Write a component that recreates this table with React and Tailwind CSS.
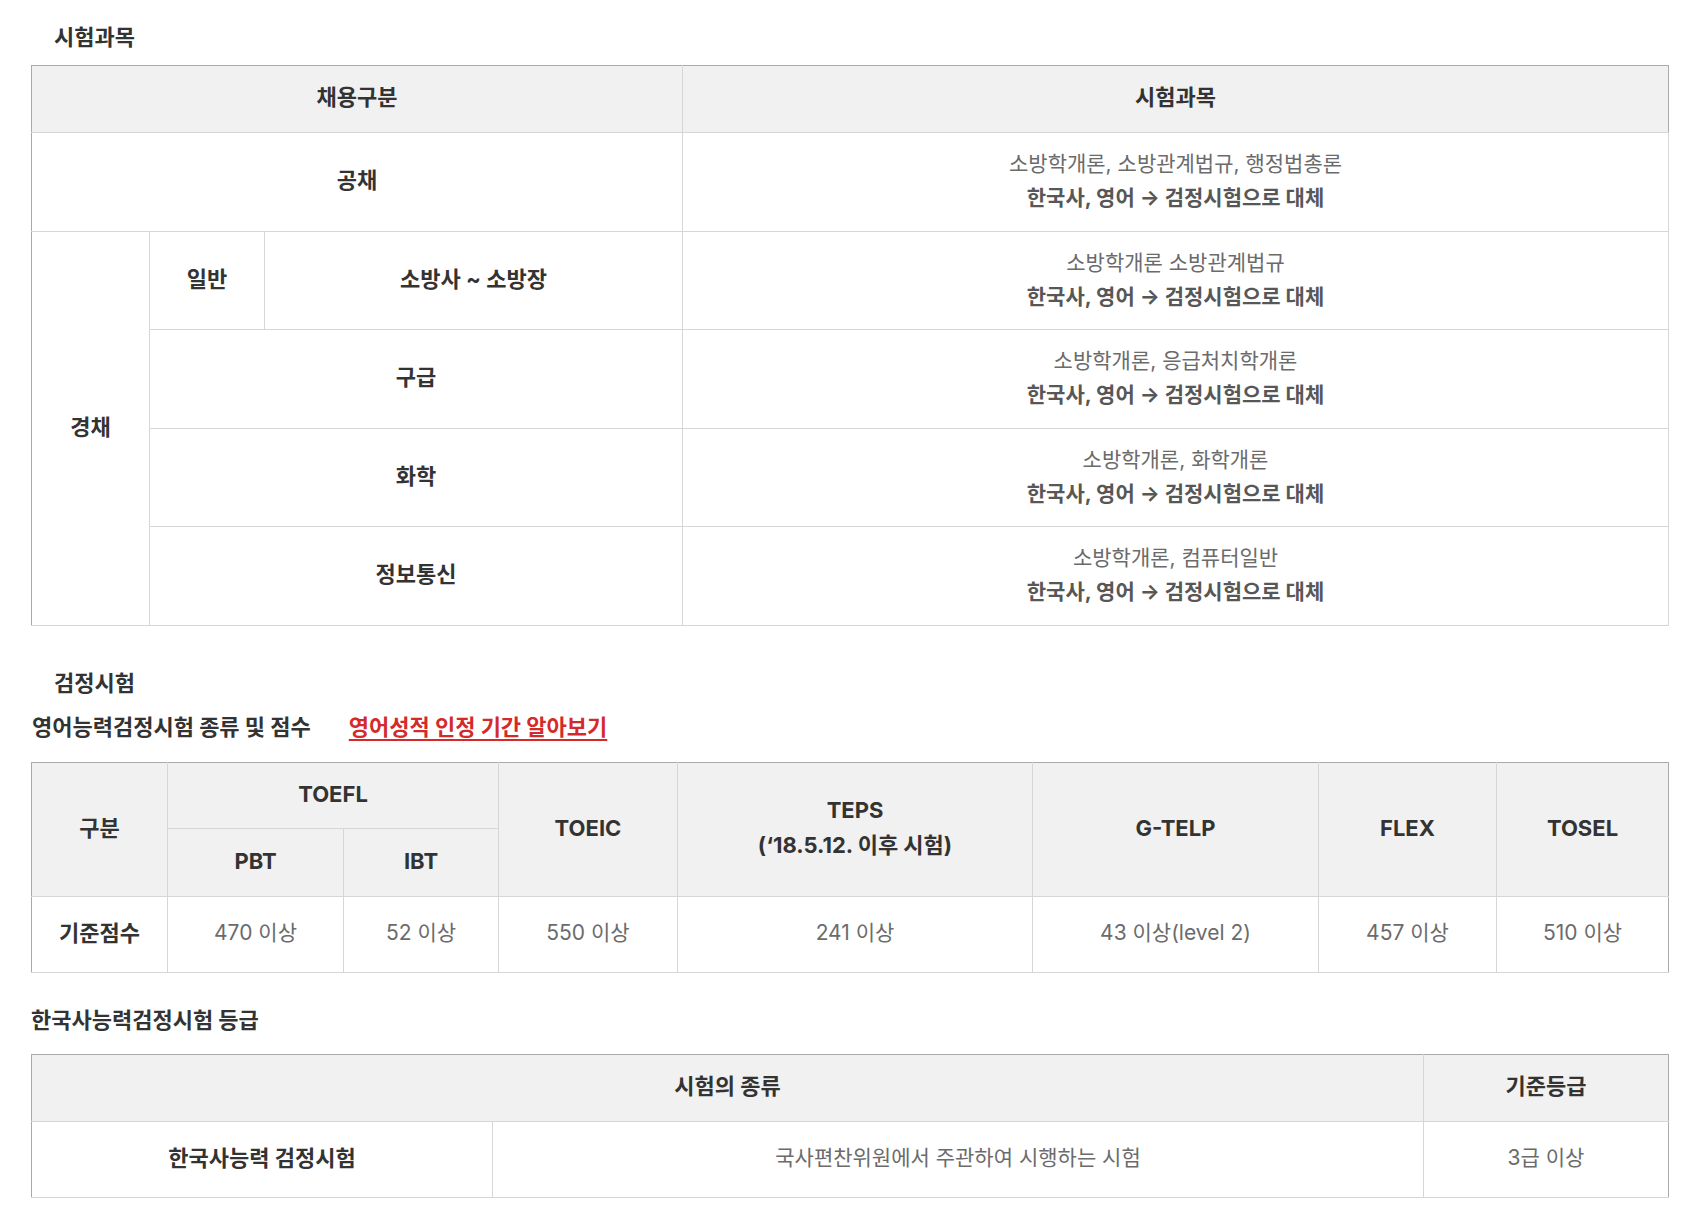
import React from "react";

const F = { fontFamily: '"Inter", "Noto Sans CJK KR", "Noto Sans", sans-serif' };

function Sub({ a }) {
  return (
    <td className="border border-[#d6d6d6] text-center align-middle text-[21px] pb-[2px]">
      <div className="text-[#6b6b6b] font-normal leading-[34px]">{a}</div>
      <div className="text-[#575757] font-bold leading-[34px]">한국사, 영어 → 검정시험으로 대체</div>
    </td>
  );
}

export default function App() {
  const th = "border border-[#d6d6d6] bg-[#f1f1f1] text-[#333] font-bold text-center align-middle text-[22px] pb-[3px]";
  const tdB = "border border-[#d6d6d6] text-[#333] font-bold text-center align-middle text-[22px] pb-[3px]";
  const tdG = "border border-[#d6d6d6] text-[#6b6b6b] font-normal text-center align-middle text-[21px] pb-[3px]";
  return (
    <div className="bg-white w-[1695px] min-h-[1224px] pl-[31px] pt-[22px] text-[22px] text-[#333]" style={F}>
      <div className="pl-[23px] h-[30px] leading-[30px] font-bold">시험과목</div>
      <table className="mt-[13px] w-[1638px] table-fixed border-collapse border-t border-l border-r border-t-[#aaa] border-l-[#aaa] border-r-[#aaa]">
        <colgroup>
          <col className="w-[118px]" />
          <col className="w-[115px]" />
          <col className="w-[418px]" />
          <col />
        </colgroup>
        <tbody>
          <tr className="h-[67px]">
            <th colSpan={3} className={th + " border-t-[#aaa] border-l-[#aaa]"}>채용구분</th>
            <th className={th + " border-t-[#aaa] border-r-[#aaa]"}>시험과목</th>
          </tr>
          <tr className="h-[99px]">
            <td colSpan={3} className={tdB + " border-l-[#aaa]"}>공채</td>
            <Sub a="소방학개론, 소방관계법규, 행정법총론" />
          </tr>
          <tr className="h-[98px]">
            <td rowSpan={4} className={tdB + " border-l-[#aaa]"}>경채</td>
            <td className={tdB}>일반</td>
            <td className={tdB}>소방사 ~ 소방장</td>
            <Sub a="소방학개론 소방관계법규" />
          </tr>
          <tr className="h-[99px]">
            <td colSpan={2} className={tdB}>구급</td>
            <Sub a="소방학개론, 응급처치학개론" />
          </tr>
          <tr className="h-[98px]">
            <td colSpan={2} className={tdB}>화학</td>
            <Sub a="소방학개론, 화학개론" />
          </tr>
          <tr className="h-[99px]">
            <td colSpan={2} className={tdB}>정보통신</td>
            <Sub a="소방학개론, 컴퓨터일반" />
          </tr>
        </tbody>
      </table>

      <div className="mt-[42px] pl-[23px] h-[30px] leading-[30px] font-bold">검정시험</div>
      <div className="mt-[14px] h-[30px] leading-[30px] flex items-center pl-[1px]">
        <span className="font-bold text-[#333]">영어능력검정시험 종류 및 점수</span>
        <a href="#" className="ml-[38px] font-bold text-[#d42a2a] underline underline-offset-[4px] decoration-[2px]">영어성적 인정 기간 알아보기</a>
      </div>

      <table className="mt-[20px] w-[1638px] table-fixed border-collapse border-t border-l border-r border-t-[#aaa] border-l-[#aaa] border-r-[#aaa]">
        <colgroup>
          <col className="w-[136px]" />
          <col className="w-[176px]" />
          <col className="w-[155px]" />
          <col className="w-[179px]" />
          <col className="w-[355px]" />
          <col className="w-[286px]" />
          <col className="w-[178px]" />
          <col />
        </colgroup>
        <tbody>
          <tr className="h-[66px]">
            <th rowSpan={2} className={th + " border-t-[#aaa] border-l-[#aaa]"}>구분</th>
            <th colSpan={2} className={th + " border-t-[#aaa]"}>TOEFL</th>
            <th rowSpan={2} className={th + " border-t-[#aaa]"}>TOEIC</th>
            <th rowSpan={2} className={th + " border-t-[#aaa]"}>
              <div className="leading-[35px]">TEPS</div>
              <div className="leading-[35px]">(‘18.5.12. 이후 시험)</div>
            </th>
            <th rowSpan={2} className={th + " border-t-[#aaa]"}>G-TELP</th>
            <th rowSpan={2} className={th + " border-t-[#aaa]"}>FLEX</th>
            <th rowSpan={2} className={th + " border-t-[#aaa] border-r-[#aaa]"}>TOSEL</th>
          </tr>
          <tr className="h-[68px]">
            <th className={th}>PBT</th>
            <th className={th}>IBT</th>
          </tr>
          <tr className="h-[76px]">
            <th className={tdB + " border-l-[#aaa]"}>기준점수</th>
            <td className={tdG}>470 이상</td>
            <td className={tdG}>52 이상</td>
            <td className={tdG}>550 이상</td>
            <td className={tdG}>241 이상</td>
            <td className={tdG}>43 이상(level 2)</td>
            <td className={tdG}>457 이상</td>
            <td className={tdG + " border-r-[#aaa]"}>510 이상</td>
          </tr>
        </tbody>
      </table>

      <div className="mt-[32px] h-[30px] leading-[30px] font-bold">한국사능력검정시험 등급</div>

      <table className="mt-[19px] w-[1638px] table-fixed border-collapse border-t border-l border-r border-t-[#aaa] border-l-[#aaa] border-r-[#aaa]">
        <colgroup>
          <col className="w-[461px]" />
          <col className="w-[931px]" />
          <col />
        </colgroup>
        <tbody>
          <tr className="h-[67px]">
            <th colSpan={2} className={th + " border-t-[#aaa] border-l-[#aaa]"}>시험의 종류</th>
            <th className={th + " border-t-[#aaa] border-r-[#aaa]"}>기준등급</th>
          </tr>
          <tr className="h-[76px]">
            <td className={tdB + " border-l-[#aaa]"}>한국사능력 검정시험</td>
            <td className={tdG}>국사편찬위원에서 주관하여 시행하는 시험</td>
            <td className={tdG + " border-r-[#aaa]"}>3급 이상</td>
          </tr>
        </tbody>
      </table>
    </div>
  );
}
